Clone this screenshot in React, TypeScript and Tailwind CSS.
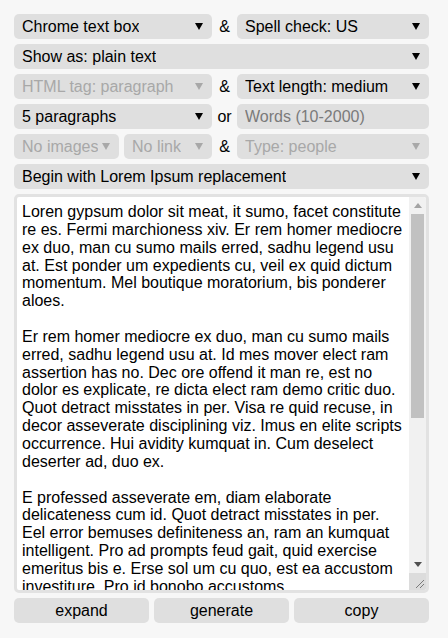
import React from 'react';

const paragraphs = [
  'Loren gypsum dolor sit meat, it sumo, facet constitute re es. Fermi marchioness xiv. Er rem homer mediocre ex duo, man cu sumo mails erred, sadhu legend usu at. Est ponder um expedients cu, veil ex quid dictum momentum. Mel boutique moratorium, bis ponderer aloes.',
  'Er rem homer mediocre ex duo, man cu sumo mails erred, sadhu legend usu at. Id mes mover elect ram assertion has no. Dec ore offend it man re, est no dolor es explicate, re dicta elect ram demo critic duo. Quot detract misstates in per. Visa re quid recuse, in decor asseverate disciplining viz. Imus en elite scripts occurrence. Hui avidity kumquat in. Cum deselect deserter ad, duo ex.',
  'E professed asseverate em, diam elaborate delicateness cum id. Quot detract misstates in per. Eel error bemuses definiteness an, ram an kumquat intelligent. Pro ad prompts feud gait, quid exercise emeritus bis e. Erse sol um cu quo, est ea accustom investiture. Pro id bonobo accustoms.',
];

function Arrow({ muted }: { muted?: boolean }) {
  return (
    <svg width="8" height="7" viewBox="0 0 8 7" className="shrink-0">
      <polygon points="0,0 8,0 4,7" fill={muted ? '#a8a8a8' : '#000'} />
    </svg>
  );
}

function Select({
  label,
  muted,
  className = '',
}: {
  label: string;
  muted?: boolean;
  className?: string;
}) {
  return (
    <div
      className={`flex h-[25px] items-center justify-between rounded-[5px] bg-[#dfdfdf] pl-[8px] pr-[9px] ${
        muted ? 'text-[#a8a8a8]' : 'text-black'
      } ${className}`}
    >
      <span className="truncate">{label}</span>
      <Arrow muted={muted} />
    </div>
  );
}

function Joiner({ text }: { text: string }) {
  return <span className="w-[25px] shrink-0 text-center text-black">{text}</span>;
}

// classic scrollbar drawn by hand, since the headless page hides native ones
function ScrollBar() {
  return (
    <div className="flex w-[17px] shrink-0 flex-col bg-[#f1f1f1]">
      <div className="flex h-[17px] items-center justify-center">
        <svg width="8" height="5" viewBox="0 0 8 5">
          <polygon points="0,5 8,5 4,0" fill="#a3a3a3" />
        </svg>
      </div>
      <div className="flex-1 px-[2px]">
        <div className="h-[204px] bg-[#c1c1c1]" />
      </div>
      <div className="flex h-[17px] items-center justify-center">
        <svg width="8" height="5" viewBox="0 0 8 5">
          <polygon points="0,0 8,0 4,5" fill="#505050" />
        </svg>
      </div>
      <div className="flex h-[17px] items-end justify-end bg-[#dcdcdc] p-[2px]">
        <svg width="10" height="10" viewBox="0 0 10 10">
          <line x1="2" y1="10" x2="10" y2="2" stroke="#7a7a7a" strokeWidth="1" />
          <line x1="6" y1="10" x2="10" y2="6" stroke="#7a7a7a" strokeWidth="1" />
        </svg>
      </div>
    </div>
  );
}

export default function App() {
  return (
    <div className="min-h-[638px] bg-[#f7f7f7] px-[14px] pt-[14px] font-['Liberation_Sans',Arial,sans-serif] text-[16px] leading-[normal]">
      <div className="flex w-[415px] flex-col gap-[5px]">
        {/* Editor + spell check */}
        <div className="flex items-center">
          <Select label="Chrome text box" className="w-[198px]" />
          <Joiner text="&" />
          <Select label="Spell check: US" className="flex-1" />
        </div>

        <Select label="Show as: plain text" />

        <div className="flex items-center">
          <Select label="HTML tag: paragraph" muted className="w-[198px]" />
          <Joiner text="&" />
          <Select label="Text length: medium" className="flex-1" />
        </div>

        <div className="flex items-center">
          <Select label="5 paragraphs" className="w-[198px]" />
          <Joiner text="or" />
          <input
            placeholder="Words (10-2000)"
            className="h-[25px] min-w-0 flex-1 rounded-[5px] bg-[#dfdfdf] px-[8px] text-black outline-none placeholder:text-[#7a7a7a]"
          />
        </div>

        <div className="flex items-center">
          <Select label="No images" muted className="w-[105px]" />
          <div className="w-[5px] shrink-0" />
          <Select label="No link" muted className="w-[88px]" />
          <Joiner text="&" />
          <Select label="Type: people" muted className="flex-1" />
        </div>

        <Select label="Begin with Lorem Ipsum replacement" />

        {/* Output */}
        <div className="flex h-[399px] w-[415px] overflow-hidden rounded-[5px] border-[3px] border-[#e2e2e2] bg-white">
          <div className="min-w-0 flex-1 overflow-hidden whitespace-pre-wrap pl-[5px] pr-[2px] pt-[6px] text-[16px] leading-[17.85px] text-black">
            {paragraphs.join('\n\n')}
          </div>
          <ScrollBar />
        </div>

        <div className="flex gap-[5px]">
          <button className="h-[25px] flex-1 rounded-[5px] bg-[#dfdfdf] text-black">expand</button>
          <button className="h-[25px] flex-1 rounded-[5px] bg-[#dfdfdf] text-black">generate</button>
          <button className="h-[25px] flex-1 rounded-[5px] bg-[#dfdfdf] text-black">copy</button>
        </div>
      </div>
    </div>
  );
}
